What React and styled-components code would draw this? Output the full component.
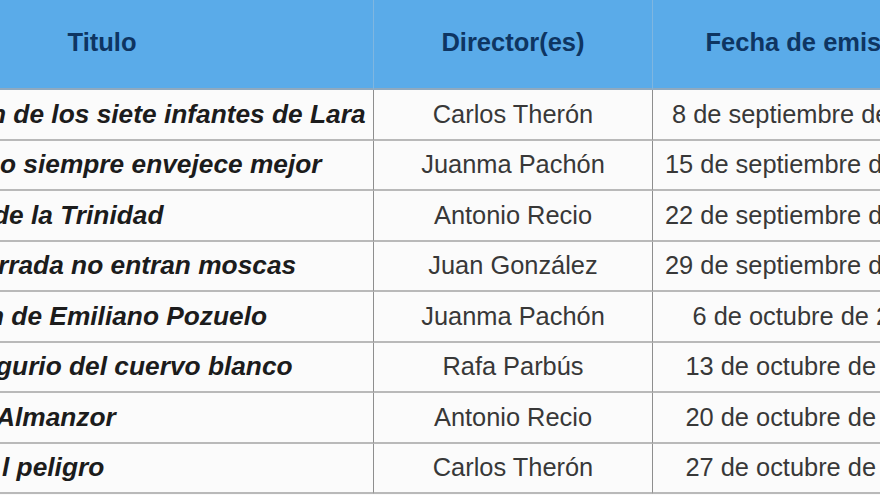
import React from "react";
import styled, { createGlobalStyle } from "styled-components";

const GlobalStyle = createGlobalStyle`
  html, body {
    margin: 0;
    padding: 0;
    background: #fafafa;
    overflow: hidden;
  }
`;

const Page = styled.div`
  width: 880px;
  height: 495px;
  overflow: hidden;
`;

const Table = styled.table`
  margin-left: -169px;
  border-collapse: separate;
  border-spacing: 0;
  table-layout: fixed;
  width: 1139px;
  font-family: "Liberation Sans", Arial, sans-serif;
`;

const HeadRow = styled.tr`
  height: 90px;
  background: #5aabe9;
`;

const HeadCell = styled.th`
  width: ${(props) => props.$width}px;
  padding: 0 0 4px;
  font-size: 25.5px;
  font-weight: bold;
  color: #0e3562;
  text-align: center;
  vertical-align: middle;
  border-bottom: 2px solid #8fa9bf;
  border-right: 1px solid #7fb6e0;
`;

const Row = styled.tr`
  height: 50.5px;
  background: #fbfbfb;
`;

const Cell = styled.td`
  padding: 0;
  font-size: 25.4px;
  color: #383838;
  text-align: center;
  vertical-align: middle;
  white-space: nowrap;
  overflow: hidden;
  border-bottom: 2px solid #b9b9b9;
  border-right: 1px solid #8e8e8e;
`;

const TitleCell = styled(Cell)`
  text-align: left;
  padding-left: ${(props) => 169 + props.$indent}px;
  font-size: 26.3px;
  font-weight: bold;
  font-style: italic;
  color: #1c1c1c;
`;

const episodes = [
  { title: "n de los siete infantes de Lara", indent: -10, director: "Carlos Therón", date: "8 de septiembre de 2015" },
  { title: "o siempre envejece mejor", indent: 0, director: "Juanma Pachón", date: "15 de septiembre de 2015" },
  { title: "de la Trinidad", indent: -7, director: "Antonio Recio", date: "22 de septiembre de 2015" },
  { title: "rrada no entran moscas", indent: -2, director: "Juan González", date: "29 de septiembre de 2015" },
  { title: "n de Emiliano Pozuelo", indent: -12, director: "Juanma Pachón", date: "6 de octubre de 2015" },
  { title: "gurio del cuervo blanco", indent: -4, director: "Rafa Parbús", date: "13 de octubre de 2015" },
  { title: "Almanzor", indent: -4, director: "Antonio Recio", date: "20 de octubre de 2015" },
  { title: "l peligro", indent: 2, director: "Carlos Therón", date: "27 de octubre de 2015" },
];

const App = () => {
  return (
    <Page>
      <GlobalStyle />
      <Table>
        <thead>
          <HeadRow>
            <HeadCell $width={542}>Titulo</HeadCell>
            <HeadCell $width={278}>Director(es)</HeadCell>
            <HeadCell $width={319}>Fecha de emisión</HeadCell>
          </HeadRow>
        </thead>
        <tbody>
          {episodes.map((ep, i) => (
            <Row key={i}>
              <TitleCell $indent={ep.indent}>{ep.title}</TitleCell>
              <Cell>{ep.director}</Cell>
              <Cell>{ep.date}</Cell>
            </Row>
          ))}
        </tbody>
      </Table>
    </Page>
  );
};

export default App;
